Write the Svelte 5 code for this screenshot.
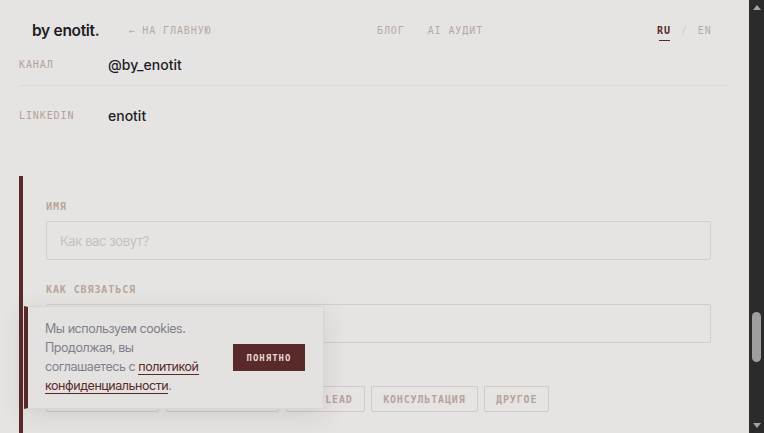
<script>
  const chips = ['АВТОМАТИЗАЦИЯ', 'ИНТЕГРАЦИЯ AI', 'TECHLEAD', 'КОНСУЛЬТАЦИЯ', 'ДРУГОЕ'];
</script>

<div class="window">
  <div class="viewport">
    <header>
      <div class="left">
        <span class="logo">by enotit<i>.</i></span>
        <a class="link" href="#home">← НА ГЛАВНУЮ</a>
      </div>
      <nav>
        <a class="link" href="#blog">БЛОГ</a>
        <a class="link" href="#audit">AI АУДИТ</a>
      </nav>
      <div class="lang">
        <span class="active">RU</span>
        <span class="sep">/</span>
        <span class="link">EN</span>
      </div>
    </header>

    <main>
      <div class="row first">
        <span class="key">КАНАЛ</span>
        <span class="val">@by_enotit</span>
      </div>
      <div class="row">
        <span class="key">LINKEDIN</span>
        <span class="val">enotit</span>
      </div>

      <form>
        <label for="name">ИМЯ</label>
        <input id="name" placeholder="Как вас зовут?" />
        <label for="contact">КАК СВЯЗАТЬСЯ</label>
        <input id="contact" />
        <span class="label">ТИП ЗАПРОСА</span>
        <div class="chips">
          {#each chips as chip}
            <span class="chip">{chip}</span>
          {/each}
        </div>
      </form>
    </main>

    <div class="cookie">
      <p>Мы используем cookies. Продолжая, вы соглашаетесь с <a href="#privacy">политикой конфиденциальности</a>.</p>
      <button>ПОНЯТНО</button>
    </div>
  </div>

  <aside class="scrollbar">
    <span class="up"></span>
    <span class="track"><span class="thumb"></span></span>
    <span class="down"></span>
  </aside>
</div>

<style>
  :global(body) {
    margin: 0;
    overflow: hidden;
  }
  .window {
    display: flex;
    width: 764px;
    height: 433px;
    overflow: hidden;
    background: #e6e4e2;
    font-family: Inter, "Noto Sans", sans-serif;
  }
  .viewport {
    position: relative;
    flex: 1;
    overflow: hidden;
  }

  /* fixed site header lies over the scrolled page */
  header {
    position: absolute;
    top: 0;
    left: 0;
    right: 0;
    height: 54px;
    display: grid;
    grid-template-columns: 345px 280px 1fr;
    align-items: center;
    padding: 6px 0 0 32px;
    box-sizing: border-box;
    background: #e6e4e2;
  }
  .left {
    display: flex;
    align-items: center;
    gap: 29px;
  }
  .logo {
    font-size: 15.5px;
    font-weight: 600;
    letter-spacing: -0.3px;
    color: #1d1d26;
  }
  .logo i {
    font-style: normal;
    color: #5a2a2a;
  }
  .link, .active, .sep {
    font-family: "DejaVu Sans Mono", monospace;
    font-size: 10px;
    letter-spacing: 0.9px;
    color: #b5a9a7;
    text-decoration: none;
  }
  nav {
    display: flex;
    gap: 23px;
  }
  .lang {
    display: flex;
    gap: 10px;
  }
  .active {
    position: relative;
    font-weight: 700;
    color: #5a2a2a;
  }
  .active::after {
    content: '';
    position: absolute;
    left: 2px;
    right: 1px;
    bottom: -5px;
    height: 1px;
    background: #5a2a2a;
  }
  .sep {
    color: #d2cdcb;
  }

  main {
    padding: 54px 19px 0;
  }
  .row {
    display: grid;
    grid-template-columns: 89px 1fr;
    align-items: center;
    height: 20px;
    padding: 19px 0 12px;
  }
  .row.first {
    padding: 0 0 11px;
    border-bottom: 1px solid #dcdad7;
  }
  .key {
    font-family: "DejaVu Sans Mono", monospace;
    font-size: 10px;
    letter-spacing: 0.9px;
    color: #b5a09c;
  }
  .val {
    font-size: 14px;
    font-weight: 500;
    color: #1d1d26;
  }

  form {
    display: flex;
    flex-direction: column;
    margin-top: 39px;
    padding: 25px 19px 0 23px;
    border-left: 4px solid #5a2a2a;
  }
  label, .label {
    height: 12px;
    margin-bottom: 8px;
    font-family: "DejaVu Sans Mono", monospace;
    font-size: 10px;
    line-height: 12px;
    letter-spacing: 0.9px;
    font-weight: 700;
    color: #b9a598;
  }
  input {
    height: 39px;
    box-sizing: border-box;
    margin-bottom: 24px;
    padding: 0 13px;
    background: transparent;
    border: 1px solid #d0cdcb;
    border-radius: 2px;
    font-family: inherit;
    font-size: 13px;
    letter-spacing: -0.4px;
    outline: none;
  }
  input::placeholder {
    color: #c4c1be;
  }
  .chips {
    display: flex;
    gap: 6.5px;
    margin-top: -1px;
    padding-bottom: 40px;
  }
  .chip {
    height: 26px;
    box-sizing: border-box;
    display: flex;
    align-items: center;
    padding: 0 11px;
    border: 1px solid #d0c9c6;
    border-radius: 2px;
    font-family: "DejaVu Sans Mono", monospace;
    font-size: 10px;
    font-weight: 700;
    letter-spacing: 0.85px;
    color: #b7a29b;
    white-space: nowrap;
  }

  .cookie {
    position: absolute;
    left: 24px;
    top: 306px;
    width: 300px;
    height: 103px;
    box-sizing: border-box;
    display: flex;
    align-items: center;
    gap: 18px;
    padding: 0 18px 0 17px;
    background: #e4e2e0;
    border: 1px solid #d8d6d3;
    border-left: 4px solid #5a2a2a;
    box-shadow: 0 6px 24px rgba(60, 40, 40, 0.12);
  }
  .cookie p {
    flex: 1;
    margin: 0 0 2px;
    font-size: 12.5px;
    line-height: 19px;
    letter-spacing: -0.45px;
    color: #80808c;
  }
  .cookie a {
    color: #5a2a2a;
    text-decoration: none;
    border-bottom: 1px solid #5a2a2a;
  }
  button {
    flex: none;
    width: 72px;
    height: 27px;
    padding: 0;
    border: 0;
    background: #5a2a2a;
    color: #e6d9d6;
    font-family: "DejaVu Sans Mono", monospace;
    font-size: 9px;
    font-weight: 700;
    letter-spacing: 1px;
  }

  .scrollbar {
    flex: none;
    width: 15px;
    display: flex;
    flex-direction: column;
    align-items: center;
    background: #2b2b2b;
  }
  .up, .down {
    flex: none;
    width: 0;
    height: 0;
    margin: 5px 0;
    border-left: 4.5px solid transparent;
    border-right: 4.5px solid transparent;
  }
  .up {
    border-bottom: 5px solid #a3a3a3;
  }
  .down {
    border-top: 5px solid #a3a3a3;
  }
  .track {
    flex: 1;
    width: 100%;
    display: flex;
    justify-content: center;
  }
  .thumb {
    width: 9px;
    height: 50px;
    margin-top: 297px;
    border-radius: 5px;
    background: #9f9f9f;
  }
</style>
